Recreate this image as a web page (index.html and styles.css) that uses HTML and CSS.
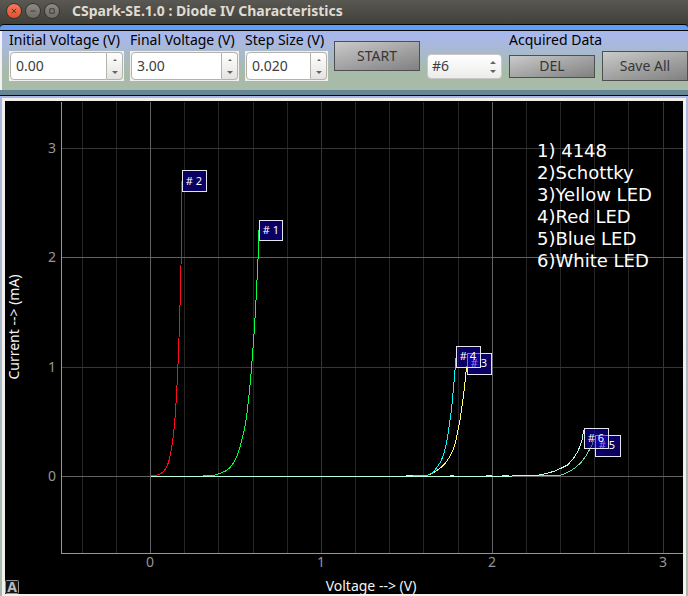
FILE: index.html
```html
<!DOCTYPE html>
<html lang="en">
<head>
<meta charset="utf-8">
<title>CSpark-SE.1.0 : Diode IV Characteristics</title>
<link rel="stylesheet" href="styles.css">
</head>
<body>
<header class="titlebar">
  <button class="win close" aria-label="Close"><svg viewBox="0 0 16 16"><path d="M5.5 5.5l5 5M10.5 5.5l-5 5"/></svg></button>
  <button class="win" aria-label="Minimize"><svg viewBox="0 0 16 16"><path d="M5 8h6"/></svg></button>
  <button class="win" aria-label="Maximize"><svg viewBox="0 0 16 16"><path d="M5.5 5.5h5v5h-5z"/></svg></button>
  <h1>CSpark-SE.1.0 : Diode IV Characteristics</h1>
</header>
<div class="strip"></div>
<main>
  <form class="toolbar">
    <div class="field initial">
      <label for="initial">Initial Voltage (V)</label>
      <div class="spin">
        <input id="initial" type="number" step="0.01" value="0.00">
        <div class="arrows">
          <button type="button" aria-label="Increase initial voltage"><svg viewBox="0 0 6 3"><path d="M1 3l2-2 2 2z"/></svg></button>
          <button type="button" aria-label="Decrease initial voltage"><svg viewBox="0 0 6 3"><path d="M0 0h6l-3 3z"/></svg></button>
        </div>
      </div>
    </div>
    <div class="field final">
      <label for="final">Final Voltage (V)</label>
      <div class="spin">
        <input id="final" type="number" step="0.01" value="3.00">
        <div class="arrows">
          <button type="button" aria-label="Increase final voltage"><svg viewBox="0 0 6 3"><path d="M1 3l2-2 2 2z"/></svg></button>
          <button type="button" aria-label="Decrease final voltage"><svg viewBox="0 0 6 3"><path d="M0 0h6l-3 3z"/></svg></button>
        </div>
      </div>
    </div>
    <div class="field step">
      <label for="step">Step Size (V)</label>
      <div class="spin">
        <input id="step" type="number" step="0.001" value="0.020">
        <div class="arrows">
          <button type="button" aria-label="Increase step size"><svg viewBox="0 0 6 3"><path d="M1 3l2-2 2 2z"/></svg></button>
          <button type="button" aria-label="Decrease step size"><svg viewBox="0 0 6 3"><path d="M0 0h6l-3 3z"/></svg></button>
        </div>
      </div>
    </div>
    <button type="button" class="action start">START</button>
    <fieldset class="acquired">
      <legend>Acquired Data</legend>
      <div class="picker">
        <select aria-label="Acquired trace"><option>#6</option><option>#5</option><option>#4</option><option>#3</option><option>#2</option><option>#1</option></select>
        <svg viewBox="0 0 6 12"><path d="M0 3l3-3 3 3zM0 9h6l-3 3z"/></svg>
      </div>
      <button type="button" class="action del">DEL</button>
      <button type="button" class="action">Save All</button>
    </fieldset>
  </form>
  <div class="splitter"></div>
  <section class="plot">
    <svg class="chart" viewBox="5 101 678 493" role="img" aria-label="Current against voltage for six diodes">
      <g class="grid">
        <path class="minor" d="M82.5 102V553M116.5 102V553M184.5 102V553M218.5 102V553M253.5 102V553M287.5 102V553M355.5 102V553M389.5 102V553M423.5 102V553M458.5 102V553M526.5 102V553M560.5 102V553M594.5 102V553M628.5 102V553"/>
        <path class="mid" d="M321.5 102V553M663.5 102V553M62 148.5H683M62 367.5H683"/>
        <path class="major" d="M150.5 102V553M492.5 102V553M62 257.5H683M62 476.5H683"/>
        <path class="axis" d="M61.5 102V553.5H683"/>
      </g>
      <g class="ticks">
        <text x="150" y="567">0</text><text x="321" y="567">1</text><text x="492" y="567">2</text><text x="663" y="567">3</text>
        <text x="52" y="153">3</text><text x="52" y="262">2</text><text x="52" y="372">1</text><text x="52" y="481">0</text>
      </g>
      <g class="names">
        <text x="371" y="591">Voltage --&gt; (V)</text>
        <text transform="translate(19 327) rotate(-90)">Current --&gt; (mA)</text>
      </g>
      <g class="curves">
        <path stroke="#ff0a1e" d="M150.5 475.5H155L160 474L163 472L165.500 469L167.500 465L169.500 459L171.500 449L173.500 434L174.500 424L175.500 412L176.500 395L177.500 376L178.500 353L179.500 323L180.500 288L181.500 242V181"/>
        <path stroke="#05ff42" d="M202.500 475.500H213.500L219.500 473.500L225.500 471L229.500 468L233.500 463L236.500 457L238.500 452L240.500 445L242.500 437L244.500 429L246.500 417L248.500 400L250.500 380L251.500 368L252.500 355L253.500 342L254.500 327L255.500 310L256.500 291L257.500 270L258.500 248V230"/>
        <path stroke="#ffff66" d="M405.500 475.500H426L432.500 473.500L437.500 470L441.500 467L445.500 463L449.500 457L452.500 451L454.500 446L456.500 438L458.500 428L460.500 417L461.500 410L462.500 403L463.500 396L464.500 387L465.500 378L466.500 366"/>
        <path stroke="#05f8ff" d="M412.500 475.500H426.500L432.500 473L436.500 468L440.500 462L443.500 455L445.500 447L447.500 438L448.500 431L449.500 424L450.500 417L451.500 409L452.500 399L453.500 388L454.500 376L455.500 364V358"/>
        <path stroke="#79d9ae" d="M518.500 475.500H560L567.500 472.500L575 468L581.500 462L586.500 455L591 447L594.500 439"/>
        <path stroke="#b8ffe4" d="M150.5 476.5H512M450 475.5H454M486 475.5H492M502 475.5H509M512 475.5H536L546.500 473.500L555 471L561.500 468L567.500 465L573 459L577.500 452L580.500 445L582.500 438L583.500 430"/>
      </g>
      <g class="tags">
        <rect x="182.5" y="170.5" width="24" height="21"/><text x="194" y="185"># 2</text>
        <rect x="259.5" y="220.5" width="23" height="20"/><text x="271" y="234"># 1</text>
        <rect x="467.5" y="353.5" width="24" height="21"/><text x="479" y="367"># 3</text>
        <rect class="over" x="456.5" y="346.5" width="24" height="21"/><text x="468" y="360"># 4</text>
        <rect x="595.5" y="435.5" width="25" height="21"/><text x="607" y="449"># 5</text>
        <rect class="over" x="584.5" y="428.5" width="24" height="20"/><text x="596" y="442"># 6</text>
      </g>
      <g class="legend">
        <text x="537" y="157">1) 4148</text>
        <text x="537" y="179">2)Schottky</text>
        <text x="537" y="201">3)Yellow LED</text>
        <text x="537" y="223">4)Red LED</text>
        <text x="537" y="245">5)Blue LED</text>
        <text x="537" y="267">6)White LED</text>
      </g>
      <g class="auto"><rect x="5.5" y="580.5" width="13" height="13" rx="1"/><text x="12" y="592">A</text></g>
    </svg>
  </section>
</main>
</body>
</html>
```
FILE: styles.css
```css
* { box-sizing: border-box; }
body {
  margin: 0;
  font: 14px/18px "Noto Sans", "Open Sans", sans-serif;
  color: #000;
  background: #3f3e39;
}
button { margin: 0; padding: 0; font: inherit; }

.titlebar {
  display: flex;
  align-items: center;
  gap: 3px;
  height: 24px;
  padding: 0 6px 2px;
  background: linear-gradient(#595852, #403f3a);
}
.titlebar h1 {
  margin: 0 0 0 9px;
  font-size: 14px;
  font-weight: 700;
  color: #dfdbd2;
  white-space: nowrap;
}
.win {
  width: 16px;
  height: 16px;
  border: 1px solid #35342f;
  border-radius: 50%;
  background: linear-gradient(#8c8a82, #6d6b64);
}
.win svg { display: block; width: 14px; height: 14px; fill: none; stroke: #35342f; }
.win.close { background: linear-gradient(#f8785a, #e4502c); }

.strip {
  height: 7px;
  border: solid #050505;
  border-width: 1px 0;
  border-radius: 4px 4px 0 0;
  background: #5f9ef5;
}

main { background: linear-gradient(#a9b8ea, #a8bbaa); }

.toolbar {
  display: flex;
  align-items: flex-start;
  gap: 6px;
  height: 59px;
  padding-left: 7px;
  border-left: 2px solid #f2f2f4;
  background: linear-gradient(#a9b8ea 10%, #a8bba8 70%);
}
.field { display: flex; flex-direction: column; gap: 2px; white-space: nowrap; }
.field label { width: 0; }
.initial { width: 115px; }
.final { width: 109px; }
.step { width: 83px; }
.spin {
  display: flex;
  height: 30px;
  padding: 1px;
  background: #f1f0ee;
}
.spin input {
  flex: 1;
  min-width: 0;
  margin: 0;
  padding: 0 0 0 5px;
  border: 1px solid #b5b2ac;
  border-radius: 4px 0 0 4px;
  background: #fff;
  font: inherit;
  color: #3c3c3c;
  appearance: textfield;
}
.spin input::-webkit-inner-spin-button { display: none; }
.arrows {
  display: flex;
  flex-direction: column;
  width: 16px;
  border: 1px solid #b5b2ac;
  border-left: 0;
  border-radius: 0 4px 4px 0;
  background: linear-gradient(#fff, #e4e3e1);
}
.arrows button {
  display: flex;
  flex: 1;
  align-items: center;
  justify-content: center;
  border: 0;
  background: none;
}
.arrows svg { width: 6px; height: 3px; fill: #66645f; }

.action {
  width: 86px;
  height: 30px;
  border: 1px solid #4f4f51;
  background: linear-gradient(165deg, #cacaca, #808080);
  color: #363636;
  white-space: nowrap;
}
.start { margin-top: 10px; }
.acquired {
  display: grid;
  grid-template-columns: 75px 86px 86px;
  grid-template-rows: 18px 30px;
  align-items: center;
  column-gap: 7px;
  row-gap: 2px;
  margin: 0;
  padding: 0 0 0 1px;
  border: 0;
}
.acquired legend {
  float: left;
  grid-column: 2 / 4;
  padding: 0;
}
.picker { grid-row: 2; display: flex; align-items: center; }
.picker select {
  width: 100%;
  height: 25px;
  padding: 0 4px;
  border: 1px solid #c9c8c4;
  border-radius: 4px;
  background: linear-gradient(#fff, #ececeb);
  font: inherit;
  color: #3c3c3c;
  appearance: none;
}
.picker svg { width: 6px; height: 12px; margin: 2px 6px 0 -12px; fill: #66645f; pointer-events: none; }
.del { height: 23px; }

.splitter {
  height: 6px;
  border-bottom: 1px solid #050505;
  background: #658694;
}
.plot { padding: 2px 2px 0; }
.chart {
  display: block;
  width: 100%;
  border: 3px solid #f2efec;
  background: #000;
}

.grid path { fill: none; shape-rendering: crispEdges; }
.grid .minor { stroke: #262626; }
.grid .mid { stroke: #363636; }
.grid .major { stroke: #626262; }
.grid .axis { stroke: #969696; }
.curves path { fill: none; shape-rendering: crispEdges; }
.ticks text { font-size: 14px; fill: #969696; text-anchor: middle; }
.names text { font-size: 14px; fill: #f4f4f4; text-anchor: middle; }
.tags rect { fill: #0a0064; stroke: #e4e4ee; shape-rendering: crispEdges; }
.tags .over { fill: #1400c8; fill-opacity: .5; }
.tags text { font-size: 11px; fill: #fff; text-anchor: middle; }
.legend text { font: 18px "DejaVu Sans", sans-serif; fill: #fff; }
.auto rect { fill: #151515; stroke: #969696; }
.auto text { font-size: 14px; font-weight: 700; fill: #bbb; text-anchor: middle; }
```
